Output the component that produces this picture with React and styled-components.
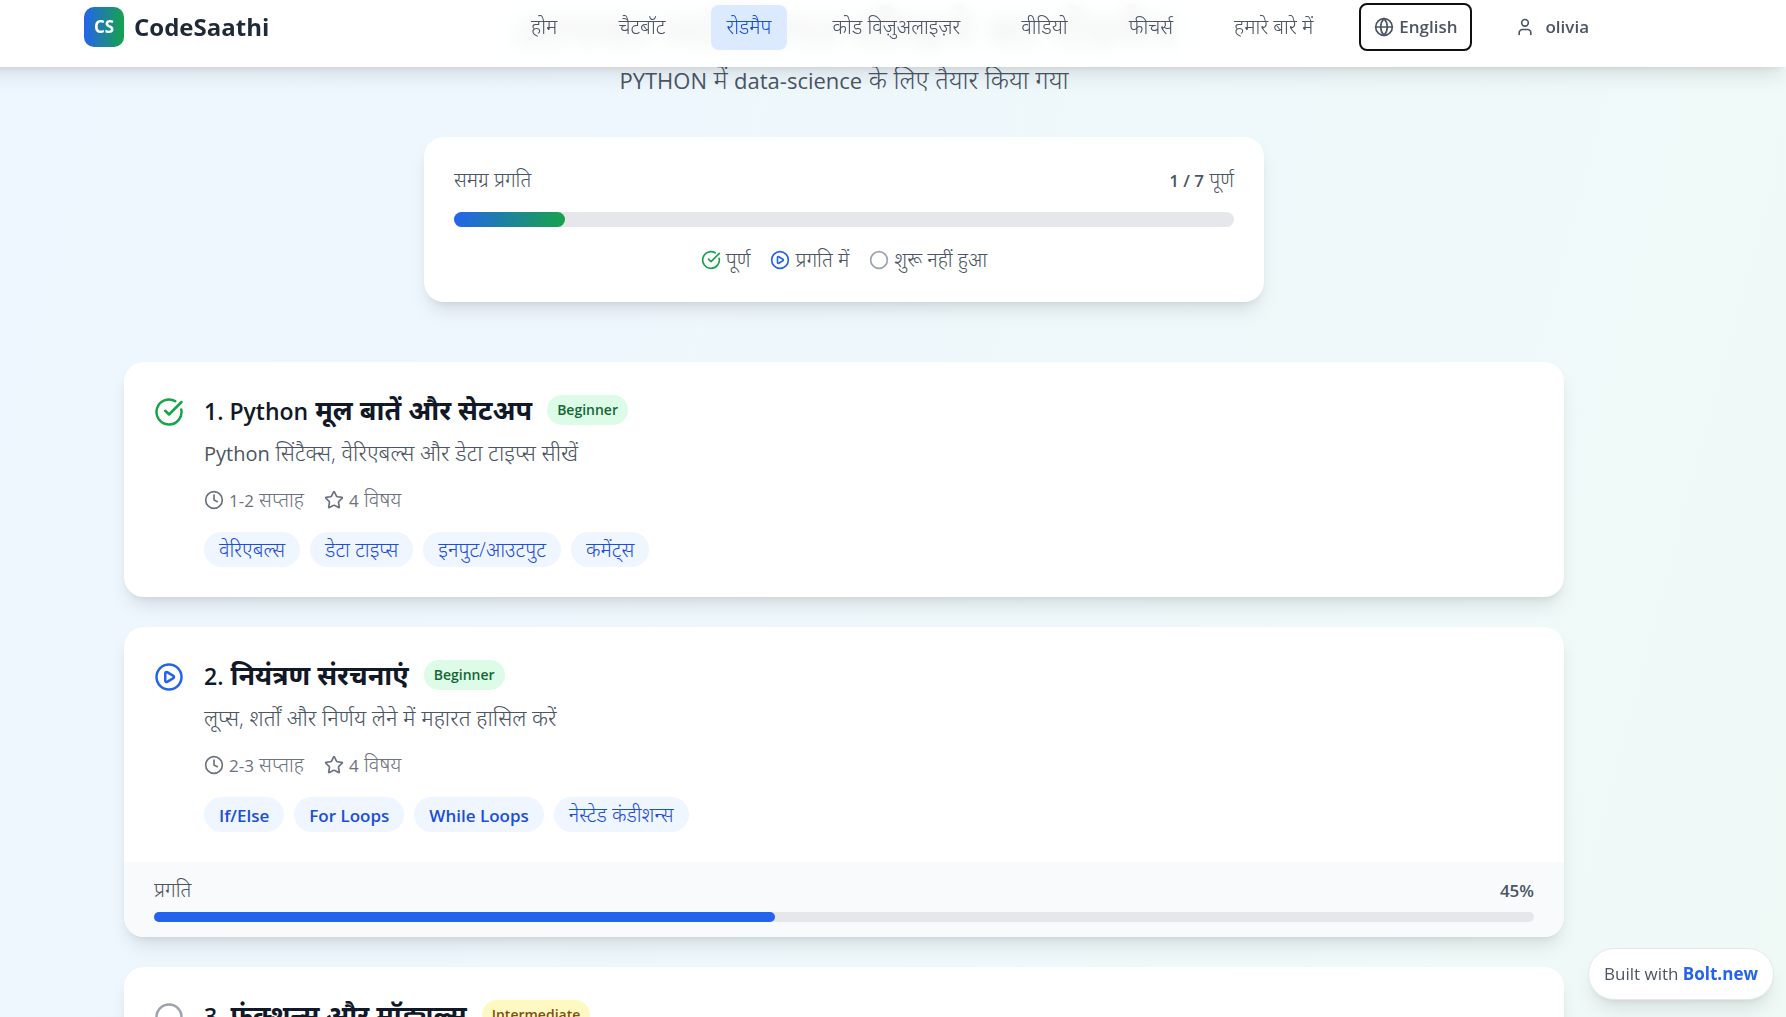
import React from 'react';
import styled, { createGlobalStyle } from 'styled-components';
import { CircleCheckBig, CirclePlay, Circle, Clock, Star, Globe, User } from 'lucide-react';

const GlobalStyle = createGlobalStyle`
  *, *::before, *::after {
    box-sizing: border-box;
  }
  body {
    margin: 0;
    font-family: 'Segoe UI', 'Open Sans', 'Noto Sans', 'Noto Sans Devanagari', 'Nirmala UI', sans-serif;
    font-size: 20px;
    font-weight: 300;
    line-height: 30px;
    color: #4b5563;
  }
  h1, h2, h3, p, ul {
    margin: 0;
    padding: 0;
  }
  ul {
    list-style: none;
  }
  a {
    color: inherit;
    text-decoration: none;
  }
  button {
    font: inherit;
    color: inherit;
    background: none;
    border: 0;
    cursor: pointer;
  }
`;

const shadow = '0 12px 19px -4px rgba(0, 0, 0, 0.1), 0 5px 8px -5px rgba(0, 0, 0, 0.1)';

const Page = styled.div`
  min-height: 100vh;
  background: linear-gradient(105deg, #eef6ff 0%, #eef7fd 30%, #effaf7 100%);
`;

const Header = styled.header`
  position: fixed;
  top: 0;
  left: -98px;
  right: 0;
  z-index: 10;
  background: rgba(255, 255, 255, 0.95);
  backdrop-filter: blur(8px);
  box-shadow: ${shadow};
`;

const HeaderInner = styled.div`
  display: flex;
  align-items: center;
  justify-content: space-between;
  max-width: 1600px;
  height: 67px;
  margin: 0 auto;
  padding: 0 40px 13px;
`;

const Brand = styled.a`
  display: flex;
  align-items: center;
  gap: 10px;
  font-size: 24px;
  font-weight: 700;
  color: #1f2937;
`;

const BrandMark = styled.span`
  display: flex;
  align-items: center;
  justify-content: center;
  width: 40px;
  height: 40px;
  border-radius: 10px;
  background: linear-gradient(90deg, #2563eb, #16a34a);
  color: #fff;
  font-size: 17px;
`;

const Nav = styled.nav`
  display: flex;
  align-items: center;
  gap: 31px;
`;

const NavLink = styled.a`
  padding: 7px 15px 8px;
  border-radius: 8px;
  background: ${props => (props.$active ? '#dbeafe' : 'transparent')};
  color: ${props => (props.$active ? '#1d4ed8' : '#4b5563')};
`;

const LanguageButton = styled.button`
  display: flex;
  align-items: center;
  gap: 5px;
  padding: 7px 13px;
  border: 2px solid #101010;
  border-radius: 8px;
  font-size: 17px;
  font-weight: 600;
`;

const UserButton = styled.button`
  display: flex;
  align-items: center;
  gap: 10px;
  padding: 8px 15px 8px 12px;
  font-size: 17px;
  font-weight: 600;
`;

const Main = styled.main`
  display: flex;
  flex-direction: column;
  align-items: center;
  padding-right: 98px;
`;

const Title = styled.h1`
  font-size: 48px;
  line-height: 60px;
  font-weight: 700;
  color: #1f2937;
`;

const Subtitle = styled.p`
  margin: 4px 0 43px;
  font-size: 25px;
`;

const Latin = styled.span`
  font-size: ${props => props.$size};
  font-weight: ${props => props.$weight};
  line-height: 1;
`;

const Card = styled.section`
  width: 100%;
  max-width: ${props => props.$width};
  margin-bottom: ${props => props.$gap};
  border-radius: 20px;
  background: #fff;
  overflow: hidden;
  box-shadow: ${shadow};
`;

const Overall = styled.div`
  padding: 30px;
`;

const Row = styled.div`
  display: flex;
  align-items: center;
  justify-content: space-between;
  line-height: 25px;
`;

const Track = styled.div`
  height: ${props => props.$size};
  margin-top: ${props => props.$space};
  border-radius: 8px;
  background: #e5e7eb;
`;

const Fill = styled.div`
  height: 100%;
  border-radius: 8px;
  background: ${props => props.$color};
`;

const Legend = styled.ul`
  display: flex;
  justify-content: center;
  gap: 20px;
  margin-top: 20px;
`;

const Item = styled.li`
  display: flex;
  align-items: center;
  gap: 5px;
  line-height: 25px;
`;

const Step = styled.article`
  display: flex;
  gap: 20px;
  padding: 30px;
`;

const StepIcon = styled.span`
  display: flex;
  padding-top: 5px;
  height: 35px;
`;

const StepHead = styled.div`
  display: flex;
  align-items: center;
  gap: 15px;
  margin-bottom: 10px;
`;

const StepTitle = styled.h3`
  font-size: 27px;
  line-height: 35px;
  font-weight: 700;
  color: #111827;
`;

const Description = styled.p`
  font-size: 22px;
`;

const tones = {
  Beginner: { background: '#dcfce7', color: '#166534' },
  Intermediate: { background: '#fef9c3', color: '#854d0e' },
};

const Level = styled.span`
  padding: 5px 10px;
  border-radius: 15px;
  font-size: 14px;
  line-height: 20px;
  font-weight: 600;
  background: ${props => tones[props.$level].background};
  color: ${props => tones[props.$level].color};
`;

const Meta = styled.ul`
  display: flex;
  gap: 20px;
  margin: 20px 0;
  color: #6b7280;
`;

const Tags = styled.ul`
  display: flex;
  flex-wrap: wrap;
  gap: 10px;
`;

const Tag = styled.li`
  padding: 5px 15px;
  border-radius: 18px;
  background: #eff6ff;
  color: #1d4ed8;
  line-height: 25px;
`;

const StepFooter = styled.footer`
  padding: 15px 30px;
  background: #f9fafb;
`;

const BoltBadge = styled.a`
  position: fixed;
  right: 12px;
  bottom: 17px;
  z-index: 10;
  padding: 10px 15px;
  border: 1px solid #e5e7eb;
  border-radius: 26px;
  background: #fff;
  font-size: 17px;
  font-weight: 400;
  box-shadow: ${shadow};

  strong {
    font-weight: 700;
    color: #2563eb;
  }
`;

const links = ['होम', 'चैटबॉट', 'रोडमैप', 'कोड विज़ुअलाइज़र', 'वीडियो', 'फीचर्स', 'हमारे बारे में'];

const icons = {
  done: { Icon: CircleCheckBig, color: '#16a34a' },
  active: { Icon: CirclePlay, color: '#2563eb' },
  todo: { Icon: Circle, color: '#9ca3af' },
};

const steps = [
  {
    status: 'done',
    title: '1. Python मूल बातें और सेटअप',
    level: 'Beginner',
    description: 'Python सिंटैक्स, वेरिएबल्स और डेटा टाइप्स सीखें',
    duration: '1-2 सप्ताह',
    topics: ['वेरिएबल्स', 'डेटा टाइप्स', 'इनपुट/आउटपुट', 'कमेंट्स'],
  },
  {
    status: 'active',
    title: '2. नियंत्रण संरचनाएं',
    level: 'Beginner',
    description: 'लूप्स, शर्तों और निर्णय लेने में महारत हासिल करें',
    duration: '2-3 सप्ताह',
    topics: ['If/Else', 'For Loops', 'While Loops', 'नेस्टेड कंडीशन्स'],
    progress: 45,
  },
  {
    status: 'todo',
    title: '3. फंक्शन्स और मॉड्यूल्स',
    level: 'Intermediate',
    topics: [],
  },
];

// Latin runs are set smaller than the Devanagari around them
const Mixed = ({ text, size = '17px', weight = 600 }) =>
  <span>
    {text.split(/([A-Za-z0-9][!-~]*(?: [!-~]+)*)/).map((part, i) => (
      i % 2 ? <Latin key={i} $size={size} $weight={weight}>{part}</Latin> : part
    ))}
  </span>;

const StatusIcon = ({ status, size }) => {
  const { Icon, color } = icons[status];
  return <Icon size={size} color={color} />;
};

const StepCard = ({ step }) =>
  <Card $width="1440px" $gap="30px">
    <Step>
      <StepIcon><StatusIcon status={step.status} size={30} /></StepIcon>
      <div>
        <StepHead>
          <StepTitle><Mixed text={step.title} size="23px" /></StepTitle>
          <Level $level={step.level}>{step.level}</Level>
        </StepHead>
        {step.description &&
          <Description><Mixed text={step.description} size="20px" weight={400} /></Description>}
        {step.duration &&
          <Meta>
            <Item><Clock size={20} /><Mixed text={step.duration} size="17px" weight={400} /></Item>
            <Item><Star size={20} /><Mixed text={`${step.topics.length} विषय`} size="17px" weight={400} /></Item>
          </Meta>}
        <Tags>
          {step.topics.map(topic => <Tag key={topic}><Mixed text={topic} /></Tag>)}
        </Tags>
      </div>
    </Step>
    {step.progress &&
      <StepFooter>
        <Row><span>प्रगति</span><Mixed text={`${step.progress}%`} /></Row>
        <Track $size="10px" $space="10px">
          <Fill $color="#2563eb" style={{ width: `${step.progress}%` }} />
        </Track>
      </StepFooter>}
  </Card>;

const App = () =>
  <Page>
    <GlobalStyle />
    <Header>
      <HeaderInner>
        <Brand href="#home"><BrandMark>CS</BrandMark>CodeSaathi</Brand>
        <Nav>
          {links.map(link =>
            <NavLink key={link} href="#nav" $active={link === 'रोडमैप'}>{link}</NavLink>,
          )}
          <LanguageButton><Globe size={20} />English</LanguageButton>
          <UserButton><User size={20} />olivia</UserButton>
        </Nav>
      </HeaderInner>
    </Header>
    <Main>
      <Title>आपका व्यक्तिगत सीखने का रोडमैप</Title>
      <Subtitle>
        <Mixed text="PYTHON में data-science के लिए तैयार किया गया" size="22px" weight={400} />
      </Subtitle>
      <Card $width="840px" $gap="60px">
        <Overall>
          <Row><span>समग्र प्रगति</span><Mixed text="1 / 7 पूर्ण" /></Row>
          <Track $size="15px" $space="20px">
            <Fill $color="linear-gradient(90deg, #2563eb, #16a34a)" style={{ width: `${100 / 7}%` }} />
          </Track>
          <Legend>
            <Item><StatusIcon status="done" size={20} />पूर्ण</Item>
            <Item><StatusIcon status="active" size={20} />प्रगति में</Item>
            <Item><StatusIcon status="todo" size={20} />शुरू नहीं हुआ</Item>
          </Legend>
        </Overall>
      </Card>
      {steps.map(step => <StepCard key={step.title} step={step} />)}
    </Main>
    <BoltBadge href="#bolt">Built with <strong>Bolt.new</strong></BoltBadge>
  </Page>;

export default App;
